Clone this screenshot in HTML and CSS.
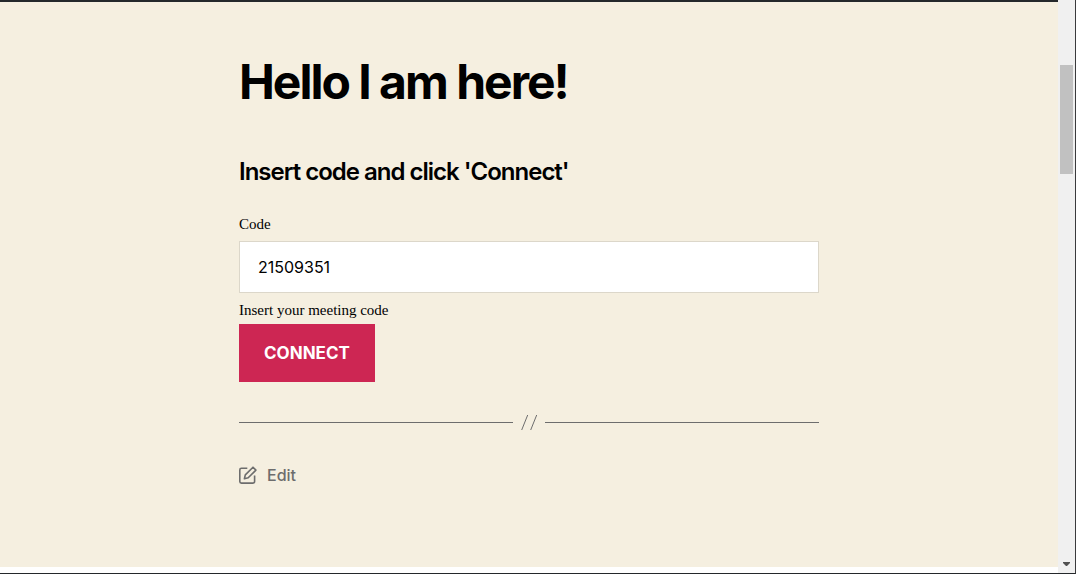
FILE: index.html
```html
<!DOCTYPE html>
<html lang="en">
<head>
<meta charset="utf-8">
<meta name="viewport" content="width=device-width, initial-scale=1">
<title>Hello I am here!</title>
<link rel="stylesheet" href="styles.css">
</head>
<body>
<div class="window">
  <main class="page">
    <article class="post">
      <h1 class="post-title">Hello I am here!</h1>
      <h2 class="form-title">Insert code and click 'Connect'</h2>
      <form class="form">
        <label class="label" for="code">Code</label>
        <input class="code-input" id="code" type="text" value="21509351" aria-describedby="code-hint">
        <p class="hint" id="code-hint">Insert your meeting code</p>
        <button class="connect" type="submit">CONNECT</button>
      </form>
      <div class="separator" role="separator">
        <svg class="slashes" viewBox="0 0 16 17" aria-hidden="true"><path d="M0.7 16 6.7 1M9.7 16 15.7 1"/></svg>
      </div>
      <a class="edit" href="#">
        <svg class="edit-icon" viewBox="0 0 18 18" aria-hidden="true"><path d="M8.3 2.3H2.4A1.6 1.6 0 0 0 .8 3.9V15.5A1.6 1.6 0 0 0 2.4 17.1H14A1.6 1.6 0 0 0 15.6 15.5V9.6M14 1.2 16.9 4.1 9.2 11.8 5.4 12.7 6.3 8.9Z"/></svg>
        <span>Edit</span>
      </a>
    </article>
  </main>
  <div class="scrollbar" aria-hidden="true">
    <div class="thumb"></div>
    <svg class="arrow" viewBox="0 0 7 4"><path d="M0 0H7V1L4 4H3L0 1Z"/></svg>
  </div>
</div>
</body>
</html>
```
FILE: styles.css
```css
* {
  box-sizing: border-box;
}

body {
  margin: 0;
  background: #f5efe0;
  color: #000;
  font-family: Inter, "Liberation Sans", sans-serif;
}

.window {
  display: flex;
  min-height: 100vh;
  border-right: 1px solid #3a3a3c;
  border-bottom: 1px solid #24282b;
}

.page {
  flex: 1;
  border-top: 2px solid #24282b;
  border-bottom: 6px solid #fff;
  padding: 48px 20px;
}

.post {
  max-width: 580px;
  margin: 0 auto;
}

.post-title {
  margin: 0 0 44px;
  font-size: 48px;
  line-height: 64px;
  font-weight: 700;
  letter-spacing: -2px;
}

.form-title {
  margin: 0 0 28px;
  font-size: 24px;
  line-height: 28px;
  font-weight: 600;
  letter-spacing: -1px;
}

.form {
  display: flex;
  flex-direction: column;
  align-items: flex-start;
  margin-bottom: 32px;
}

.label,
.hint {
  margin: 0;
  font-family: "Liberation Serif", serif;
  font-size: 15px;
  line-height: 20px;
}

.label {
  margin-bottom: 7px;
}

.code-input {
  width: 100%;
  height: 52px;
  margin-bottom: 7px;
  padding: 0 18px;
  border: 1px solid #dcd7ca;
  border-radius: 0;
  background: #fff;
  color: #000;
  font: 400 16px Inter, "Liberation Sans", sans-serif;
}

.hint {
  margin-bottom: 4px;
}

.connect {
  padding: 19px 25px;
  border: 0;
  background: #cd2653;
  color: #fff;
  font: 700 17px/20px Inter, "Liberation Sans", sans-serif;
}

.separator {
  display: flex;
  align-items: center;
  gap: 8px;
  margin-bottom: 34px;
}

.separator::before,
.separator::after {
  content: "";
  flex: 1;
  height: 1px;
  background: #6d6d6d;
}

.slashes {
  width: 16px;
  height: 17px;
  fill: none;
  stroke: #6d6d6d;
}

.edit {
  display: inline-flex;
  align-items: center;
  gap: 10px;
  color: #6d6d6d;
  font-size: 16px;
  line-height: 20px;
  font-weight: 500;
  text-decoration: none;
}

.edit-icon {
  width: 18px;
  height: 18px;
  fill: none;
  stroke: #6d6d6d;
  stroke-width: 1.6;
  stroke-linejoin: round;
}

.scrollbar {
  display: flex;
  flex-direction: column;
  justify-content: space-between;
  align-items: center;
  width: 17px;
  padding: 65px 2px 7px;
  background: #f0f0f0;
}

.thumb {
  width: 13px;
  height: 109px;
  background: #c1c1c1;
}

.arrow {
  width: 7px;
  height: 4px;
  fill: #505050;
}
```
